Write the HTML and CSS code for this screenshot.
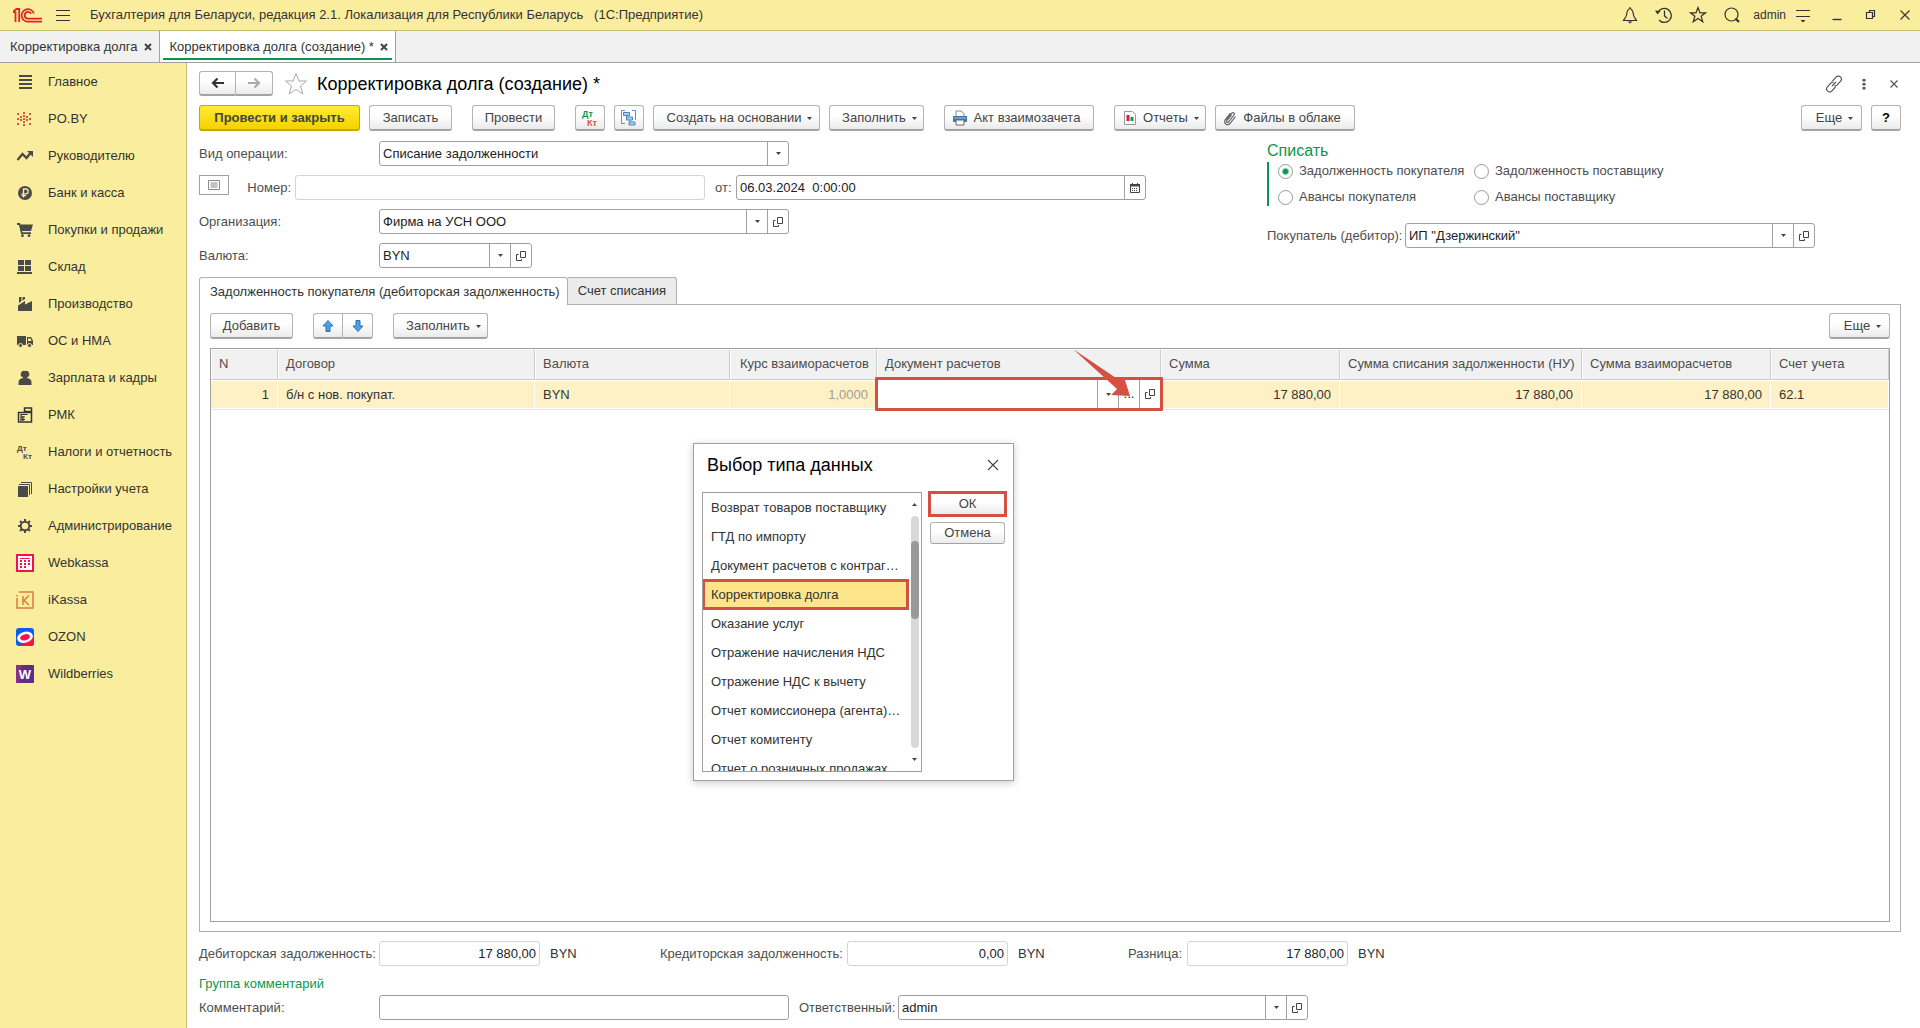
FILE: index.html
```html
<!DOCTYPE html>
<html lang="ru">
<head>
<meta charset="utf-8">
<meta name="viewport" content="width=device-width, initial-scale=1">
<title>Корректировка долга (создание)</title>
<link rel="stylesheet" href="styles.css">
</head>
<body>
<svg class="sprite" aria-hidden="true">
  <symbol id="open" viewBox="0 0 12 12"><path d="M5.500 1.500h5v6h-5zM3.500 4.500h-2v6h5v-1.500" fill="none" stroke="#444"/></symbol>
  <symbol id="caret" viewBox="0 0 7 4"><path d="M0 0h7L3.500 4z" fill="#444"/></symbol>
</svg>
<div class="app">
  <header class="topbar">
    <svg class="logo" viewBox="0 0 29 15" aria-label="1С"><g fill="none" stroke="#e5202b" stroke-width="1.800"><path d="M0 4.200H2.500V14M0 3.500L3.500 1H6.200V14M20.800 5.500A6.200 6.200 0 1 0 15 13.600H29M18 5.800A3.300 3.300 0 1 0 15 10.600H29"/></g></svg>
    <button class="plain" aria-label="Меню"><svg width="14" height="12" viewBox="0 0 14 12"><path d="M0 1.500h14M0 6.500h14M0 11.500h14" stroke="#333"/></svg></button>
    <span class="app-title">Бухгалтерия для Беларуси, редакция 2.1. Локализация для Республики Беларусь &nbsp; (1С:Предприятие)</span>
    <div class="top-tools">
      <button class="plain" aria-label="Уведомления"><svg width="18" height="18" viewBox="0 0 18 18"><path d="M9 2.500C6 3.500 6 6 5.500 9 5 11.500 3.500 12.500 2.500 14.500h13C14.500 12.500 13 11.500 12.500 9 12 6 12 3.500 9 2.500zM9 1v2" fill="none" stroke="#333" stroke-width="1.200"/><path d="M6.500 15.500h5L9 17.500z" fill="#333"/></svg></button>
      <button class="plain" aria-label="История"><svg width="18" height="18" viewBox="0 0 18 18"><path d="M3 6.500A7 7 0 1 1 4 14M9.500 4.500V10l3 2.500" fill="none" stroke="#333" stroke-width="1.300"/><path d="M0 4.500l5.500.5L2.500 8.500z" fill="#333"/></svg></button>
      <button class="plain" aria-label="Избранное"><svg width="18" height="18" viewBox="0 0 18 18"><path d="M9 1.500l2 5.300h5.500l-4.400 3.400 1.700 5.600L9 12.500l-4.800 3.300 1.700-5.600L1.500 6.800H7z" fill="none" stroke="#333" stroke-width="1.200"/></svg></button>
      <button class="plain" aria-label="Поиск"><svg width="18" height="18" viewBox="0 0 18 18"><circle cx="8.500" cy="8.500" r="6.500" fill="none" stroke="#333" stroke-width="1.200"/><path d="M12.500 12.500l3.500 3.500" stroke="#333" stroke-width="2.200"/></svg></button>
      <a class="user" href="#">admin</a>
      <button class="plain" aria-label="Настройки"><svg width="18" height="18" viewBox="0 0 18 18"><path d="M2 4.500h14M2 10.500h14" stroke="#333" stroke-width="1.200"/><path d="M6.500 14h5L9 16.500z" fill="#333"/></svg></button>
      <button class="plain" aria-label="Свернуть"><svg width="18" height="18" viewBox="0 0 18 18"><path d="M4.500 13.500h9" stroke="#333" stroke-width="1.400"/></svg></button>
      <button class="plain" aria-label="Развернуть"><svg width="18" height="18" viewBox="0 0 18 18"><path d="M4.500 6.500h6v6h-6zM7.500 6V4.500h5v6h-2" fill="none" stroke="#333" stroke-width="1.200"/></svg></button>
      <button class="plain" aria-label="Закрыть"><svg width="18" height="18" viewBox="0 0 18 18"><path d="M4.500 4.500l9 9m0-9l-9 9" stroke="#333" stroke-width="1.100"/></svg></button>
    </div>
  </header>

  <nav class="tabs">
    <a class="tab" href="#">Корректировка долга <svg width="8" height="8" viewBox="0 0 8 8"><path d="M1 1l6 6m0-6L1 7" stroke="#444" stroke-width="2"/></svg></a>
    <a class="tab current" href="#">Корректировка долга (создание) * <svg width="8" height="8" viewBox="0 0 8 8"><path d="M1 1l6 6m0-6L1 7" stroke="#444" stroke-width="2"/></svg></a>
  </nav>

  <div class="body">
    <nav class="sidebar">
      <a href="#"><svg viewBox="0 0 18 18"><path d="M3 3h13M3 7h13M3 11h13M3 15h13" stroke="#4a4a4a" stroke-width="2"/></svg>Главное</a>
      <a href="#"><svg viewBox="0 0 18 18"><g fill="none" stroke="#d9553f" stroke-width="2" stroke-dasharray="2 1"><path d="M8 2v14M5 6v6M11 6v6"/><path d="M1 4h2M13 4h2M1 9h2M13 9h2M1 14h2M13 14h2" stroke-dasharray="none"/></g></svg>PO.BY</a>
      <a href="#"><svg viewBox="0 0 18 18"><path d="M1.500 13l5-6 4 4 4-5" fill="none" stroke="#4a4a4a" stroke-width="2.400"/><path d="M11 4h6v6z" fill="#4a4a4a"/></svg>Руководителю</a>
      <a href="#"><svg viewBox="0 0 18 18"><circle cx="9" cy="9" r="7" fill="#4a4a4a"/><path d="M7.500 13.500V5h2.300a2.300 2.300 0 0 1 0 4.800H5.500M5.500 11.700h4.500" fill="none" stroke="#fbed9e" stroke-width="1.300"/></svg>Банк и касса</a>
      <a href="#"><svg viewBox="0 0 18 18"><path d="M1 2h3l.5 1.500H17L15 10H6l.3 1.200H15V13H5L3 4H1z" fill="#4a4a4a"/><circle cx="6.500" cy="14.700" r="1.400" fill="#4a4a4a"/><circle cx="13" cy="14.700" r="1.400" fill="#4a4a4a"/></svg>Покупки и продажи</a>
      <a href="#"><svg viewBox="0 0 18 18"><path d="M2 2h6v5H2zM9 2h6v5H9zM2 8h6v5H2zM9 8h6v5H9zM1 14h15v2H1z" fill="#4a4a4a"/></svg>Склад</a>
      <a href="#"><svg viewBox="0 0 18 18"><path d="M2 16V10.500L9 6v3.500L16 6v10zM3 2h2.500v4L3 8zM6.500 2H9v2L6.500 5.500z" fill="#4a4a4a"/></svg>Производство</a>
      <a href="#"><svg viewBox="0 0 18 18"><path d="M1 4h9v9H1zM11 5h4l2 3.500V13h-6z" fill="#4a4a4a"/><path d="M12 6.500h2.500L15.500 9H12z" fill="#fbed9e"/><g fill="#4a4a4a" stroke="#fbed9e"><circle cx="4.500" cy="13.500" r="2"/><circle cx="13.500" cy="13.500" r="2"/></g></svg>ОС и НМА</a>
      <a href="#"><svg viewBox="0 0 18 18"><path d="M9 2a3.300 3.300 0 0 1 2 6.300V9c3 .5 4.500 2 4.500 4.500V16h-13v-2.500C2.500 11 4 9.500 7 9v-.7A3.300 3.300 0 0 1 9 2z" fill="#4a4a4a"/></svg>Зарплата и кадры</a>
      <a href="#"><svg viewBox="0 0 18 18"><path d="M2.500 6.500h13v9.500h-13zM8.500 2h7v3.500h-7zM9 6V4.500" fill="none" stroke="#333" stroke-width="1.500"/><path d="M4.500 8.500h7M5 11h4M5 13.500h4M7 10v5M5 9v6" stroke="#333" stroke-width="1.200"/></svg>РМК</a>
      <a href="#"><svg viewBox="0 0 18 18"><text x="1" y="8" class="mini">Дт</text><text x="7" y="16" class="mini">Кт</text></svg>Налоги и отчетность</a>
      <a href="#"><svg viewBox="0 0 18 18"><path d="M2 6h10v11H2z" fill="#4a4a4a"/><path d="M3 4.500h10.500V15M5 2.500h10.500V14" fill="none" stroke="#4a4a4a"/></svg>Настройки учета</a>
      <a href="#"><svg viewBox="0 0 18 18"><circle cx="9" cy="9" r="4.300" fill="none" stroke="#4a4a4a" stroke-width="2"/><path d="M9 2v2.500M9 13.500V16M2 9h2.500M13.500 9H16M4 4l2 2M12 12l2 2M14 4l-2 2M6 12l-2 2" stroke="#4a4a4a" stroke-width="2"/></svg>Администрирование</a>
      <a href="#"><svg viewBox="0 0 18 18"><path d="M1 1h16v16H1z" fill="#fff" stroke="#f5124c" stroke-width="2"/><path d="M4 4.500h10" stroke="#f5124c"/><path d="M4 7h10M4 10h10M4 13h6" stroke="#f5124c" stroke-width="2" stroke-dasharray="2 2"/></svg>Webkassa</a>
      <a href="#"><svg viewBox="0 0 18 18"><path d="M3 1h14v16H1V7M1 5.500V4M7 5v9M13 4.500L8 9.500l5 4.500" fill="none" stroke="#de7b3c" stroke-width="1.500"/></svg>iKassa</a>
      <a href="#"><svg viewBox="0 0 18 18"><rect width="18" height="18" rx="3" fill="#0b5cf5"/><path d="M3 18L18 9v6a3 3 0 0 1-3 3z" fill="#f5124c"/><ellipse cx="9" cy="9.300" rx="8" ry="5.500" fill="#fff" transform="rotate(-15 9 9.300)"/><ellipse cx="9" cy="9.300" rx="5" ry="3" fill="#f5124c" transform="rotate(-15 9 9.300)"/></svg>OZON</a>
      <a href="#"><svg viewBox="0 0 18 18"><rect width="18" height="18" rx="1" fill="#5f2d82"/><path d="M0 1a1 1 0 0 1 1-1h5L3 18H1a1 1 0 0 1-1-1z" fill="#8a2f86"/><text x="9" y="14" text-anchor="middle" class="wb">W</text></svg>Wildberries</a>
    </nav>

    <main class="main">
      <div class="form-head">
        <div class="pair">
          <button class="btn" aria-label="Назад"><svg width="14" height="12" viewBox="0 0 14 12"><path d="M2 6h11M6.500 1.500L2 6l4.500 4.500" fill="none" stroke="#333" stroke-width="2.200"/></svg></button>
          <button class="btn" aria-label="Вперед"><svg width="14" height="12" viewBox="0 0 14 12"><path d="M1 6h11M7.500 1.500L12 6l-4.500 4.500" fill="none" stroke="#aaa" stroke-width="2.200"/></svg></button>
        </div>
        <svg class="fav" width="24" height="24" viewBox="0 0 24 24"><path d="M12 1.500l3 7.500h7.500l-6 5 2.300 8L12 17.500 5.200 22l2.300-8-6-5H9z" fill="#fff" stroke="#aaa"/></svg>
        <h1>Корректировка долга (создание) *</h1>
        <div class="head-tools">
          <button class="plain" aria-label="Ссылка"><svg width="18" height="18" viewBox="0 0 18 18"><g fill="none" stroke="#555" stroke-width="1.200"><path d="M7.500 6l3.500-3.800a3 3 0 0 1 4.600 4L12 10.200c-.8.800-1.800.8-2.500.3"/><path d="M10.500 12L7 15.800a3 3 0 0 1-4.600-4L6 7.800c.8-.8 1.800-.8 2.500-.3M7 11l4-4"/></g></svg></button>
          <button class="plain" aria-label="Действия"><svg width="18" height="18" viewBox="0 0 18 18"><path d="M7.500 4h3v2.500h-3zM7.500 8h3v2.500h-3zM7.500 12h3v2.500h-3z" fill="#555"/></svg></button>
          <button class="plain" aria-label="Закрыть форму"><svg width="18" height="18" viewBox="0 0 18 18"><path d="M5.500 5.500l7 7m0-7l-7 7" stroke="#555" stroke-width="1.200"/></svg></button>
        </div>
      </div>

      <div class="commands">
        <button class="btn primary">Провести и закрыть</button>
        <button class="btn w-m">Записать</button>
        <button class="btn w-m apart">Провести</button>
        <button class="btn square apart" aria-label="Проводки"><svg width="18" height="18" viewBox="0 0 18 18"><text x="1" y="8" class="mini dt">Дт</text><text x="6" y="17" class="mini kt">Кт</text></svg></button>
        <button class="btn square" aria-label="Структура подчиненности"><svg width="16" height="16" viewBox="0 0 16 16"><path d="M4 .5H.5v13H4M11 .5h3.500V10" fill="none" stroke="#5b94c9"/><path d="M2.500 2.500h6v3h-6zM5.500 7h6v3h-6zM8 12h6v3H8zM5.500 6v1M9 10v2" fill="#a9cdec" stroke="#4a86be"/></svg></button>
        <button class="btn w-l">Создать на основании <svg class="car"><use href="#caret"/></svg></button>
        <button class="btn w-f">Заполнить <svg class="car"><use href="#caret"/></svg></button>
        <button class="btn w-x apart"><svg width="16" height="16" viewBox="0 0 16 16"><path d="M4 6V1h5l3 2.500V6" fill="#fff" stroke="#888"/><path d="M1 6h14v6H1z" fill="#3f78ad"/><path d="M2 8h12" stroke="#9cc3e6"/><path d="M4 10h8v5H4z" fill="#fff" stroke="#666"/></svg>Акт взаимозачета</button>
        <button class="btn w-o apart"><svg class="report" width="14" height="16" viewBox="0 0 14 16"><path d="M1.500 1.500h8l3 3v10h-11z" fill="#fff" stroke="#999"/><path d="M5 5v6" stroke="#e8173f" stroke-width="3"/><path d="M9 7v4" stroke="#0a9a4a" stroke-width="3"/></svg>Отчеты <svg class="car"><use href="#caret"/></svg></button>
        <button class="btn w-c"><svg width="14" height="16" viewBox="0 0 14 16"><path d="M3 9.500l6-6.500c1.500-1 3 .3 2 2L5.500 12c-1 1-2.500 0-1.700-1.500L8.500 5M12.500 6.500L7 13.500c-2.500 2.500-6.500.5-5-3.500L7.500 3" fill="none" stroke="#666" stroke-width="1.200"/></svg>Файлы в облаке</button>
        <button class="btn w-e right">Еще <svg class="car"><use href="#caret"/></svg></button>
        <button class="btn square help">?</button>
      </div>

      <div class="form">
        <div class="fields">
          <div class="row"><label class="lab" for="op">Вид операции:</label>
            <div class="combo w-field"><select id="op"><option>Списание задолженности</option></select><span class="drop"><svg class="tri"><use href="#caret"/></svg></span></div></div>
          <div class="row">
            <div class="num-lab"><button class="note" aria-label="Примечание"><svg width="12" height="10" viewBox="0 0 12 10"><path d="M.5.500h11v9H.5zM2.500 3h7M2.500 5h7M2.500 7h7" fill="none" stroke="#888"/></svg></button><label for="num">Номер:</label></div>
            <input class="box soft w-field" id="num" type="text">
            <label class="from" for="date">от:</label>
            <div class="combo w-field"><input id="date" type="text" value="06.03.2024  0:00:00"><button aria-label="Календарь"><svg width="10" height="10" viewBox="0 0 10 10"><path d="M.5 1.500h9v8h-9z" fill="#fff" stroke="#444"/><path d="M0 1h10v2.500H0zM2 0h1v2H2zM7 0h1v2H7z" fill="#444"/><path d="M2 5.500h6M2 7.500h6" stroke="#444" stroke-dasharray="1 1"/></svg></button></div></div>
          <div class="row"><label class="lab" for="org">Организация:</label>
            <div class="combo open w-field"><select id="org"><option>Фирма на УСН ООО</option></select><span class="drop"><svg class="tri"><use href="#caret"/></svg></span><button aria-label="Открыть"><svg class="op"><use href="#open"/></svg></button></div></div>
          <div class="row"><label class="lab" for="cur">Валюта:</label>
            <div class="combo open w-cur"><select id="cur"><option>BYN</option></select><span class="drop"><svg class="tri"><use href="#caret"/></svg></span><button aria-label="Открыть"><svg class="op"><use href="#open"/></svg></button></div></div>
        </div>
        <div class="side">
          <fieldset>
            <legend>Списать</legend>
            <div class="radios">
              <label><input type="radio" name="w" checked>Задолженность покупателя</label>
              <label><input type="radio" name="w">Задолженность поставщику</label>
              <label><input type="radio" name="w">Авансы покупателя</label>
              <label><input type="radio" name="w">Авансы поставщику</label>
            </div>
          </fieldset>
          <div class="row"><label class="buyer" for="buyer">Покупатель (дебитор):</label>
            <div class="combo open w-field"><select id="buyer"><option>ИП "Дзержинский"</option></select><span class="drop"><svg class="tri"><use href="#caret"/></svg></span><button aria-label="Открыть"><svg class="op"><use href="#open"/></svg></button></div></div>
        </div>
      </div>

      <div class="pages">
        <button class="page on">Задолженность покупателя (дебиторская задолженность)</button>
        <button class="page">Счет списания</button>
      </div>
      <section class="panel">
        <div class="commands">
          <button class="btn w-m">Добавить</button>
          <div class="pair apart">
            <button class="btn" aria-label="Вверх"><svg width="12" height="12" viewBox="0 0 12 12"><path d="M6 .5l5 5.500H8v5.500H4V6H1z" fill="#4aa3e8" stroke="#2b6fae"/></svg></button>
            <button class="btn" aria-label="Вниз"><svg width="12" height="12" viewBox="0 0 12 12"><path d="M6 11.500L11 6H8V.5H4V6H1z" fill="#4aa3e8" stroke="#2b6fae"/></svg></button>
          </div>
          <button class="btn w-f apart">Заполнить <svg class="car"><use href="#caret"/></svg></button>
          <button class="btn w-e right">Еще <svg class="car"><use href="#caret"/></svg></button>
        </div>
        <div class="grid-box">
          <table>
            <colgroup><col class="c1"><col class="c2"><col class="c3"><col class="c4"><col class="c5"><col class="c6"><col class="c7"><col class="c8"><col class="c9"></colgroup>
            <thead><tr><th>N</th><th>Договор</th><th>Валюта</th><th class="num">Курс взаиморасчетов</th><th>Документ расчетов</th><th>Сумма</th><th>Сумма списания задолженности (НУ)</th><th>Сумма взаиморасчетов</th><th>Счет учета</th></tr></thead>
            <tbody><tr><td class="num">1</td><td>б/н с нов. покупат.</td><td>BYN</td><td class="num dim">1,0000</td>
              <td class="edit"><div class="combo open cell"><select aria-label="Документ расчетов"><option></option></select><span class="drop"><svg class="tri"><use href="#caret"/></svg></span><button aria-label="Выбрать">...</button><button aria-label="Открыть"><svg class="op"><use href="#open"/></svg></button></div>
                <svg class="pointer" width="60" height="50" viewBox="0 0 60 50"><path d="M1 0L47 31l5-3 6 19-19-1 6-6z" fill="#d64f43"/></svg></td>
              <td class="num">17 880,00</td><td class="num">17 880,00</td><td class="num">17 880,00</td><td>62.1</td></tr></tbody>
          </table>
        </div>
      </section>

      <div class="totals">
        <label class="lab" for="t1">Дебиторская задолженность:</label><input class="box soft sum" id="t1" type="text" readonly value="17 880,00"><span class="unit">BYN</span>
        <label class="t-cred" for="t2">Кредиторская задолженность:</label><input class="box soft sum" id="t2" type="text" readonly value="0,00"><span class="unit">BYN</span>
        <label class="t-diff" for="t3">Разница:</label><input class="box soft sum" id="t3" type="text" readonly value="17 880,00"><span class="unit">BYN</span>
      </div>
      <div class="group">Группа комментарий</div>
      <div class="row"><label class="lab" for="com">Комментарий:</label><input class="box w-field" id="com" type="text">
        <label class="resp" for="resp">Ответственный:</label>
        <div class="combo open w-field"><select id="resp"><option>admin</option></select><span class="drop"><svg class="tri"><use href="#caret"/></svg></span><button aria-label="Открыть"><svg class="op"><use href="#open"/></svg></button></div></div>

      <div class="dialog" role="dialog" aria-labelledby="dlg">
        <div class="dlg-head"><h2 id="dlg">Выбор типа данных</h2><button class="plain" aria-label="Закрыть"><svg width="12" height="12" viewBox="0 0 12 12"><path d="M1 1l10 10m0-10L1 11" stroke="#444" stroke-width="1.100"/></svg></button></div>
        <div class="dlg-body">
          <div class="list">
            <ul role="listbox" aria-labelledby="dlg">
              <li role="option">Возврат товаров поставщику</li>
              <li role="option">ГТД по импорту</li>
              <li role="option">Документ расчетов с контраг…</li>
              <li role="option" aria-selected="true" class="sel">Корректировка долга</li>
              <li role="option">Оказание услуг</li>
              <li role="option">Отражение начисления НДС</li>
              <li role="option">Отражение НДС к вычету</li>
              <li role="option">Отчет комиссионера (агента)…</li>
              <li role="option">Отчет комитенту</li>
              <li role="option">Отчет о розничных продажах</li>
            </ul>
            <div class="scroll"><svg class="tri up"><use href="#caret"/></svg><div class="track"><div class="thumb"></div></div><svg class="tri"><use href="#caret"/></svg></div>
          </div>
          <div class="dlg-btns"><button class="btn ok">ОК</button><button class="btn">Отмена</button></div>
        </div>
      </div>
    </main>
  </div>
</div>
</body>
</html>
```

FILE: styles.css
```css
* { box-sizing: border-box; }
body { margin: 0; font: 13px/18px "Liberation Sans", Arial, sans-serif; color: #333; background: #fff; }
button, input, select { font: inherit; color: inherit; margin: 0; padding: 0; border: 0; background: none; border-radius: 0; }
a { color: inherit; text-decoration: none; }
svg { flex: none; display: block; }
h1, h2 { margin: 0; font-size: 18px; line-height: 24px; font-weight: 400; color: #000; }
ul { margin: 0; padding: 0; list-style: none; }
.sprite { position: absolute; width: 0; height: 0; }
.app { min-height: 100vh; display: flex; flex-direction: column; }

.topbar { display: flex; align-items: center; height: 31px; padding: 0 6px 0 13px; background: #fbed9e; border-bottom: 1px solid #c9bd6e; }
.logo { width: 29px; height: 15px; margin-right: 14px; }
.app-title { margin-left: 20px; white-space: nowrap; }
.plain { display: flex; align-items: center; justify-content: center; }
.top-tools { display: flex; align-items: center; gap: 16px; margin-left: auto; }
.user { font-size: 12px; margin: 0 -8px 0 -4px; }

.tabs { display: flex; height: 32px; background: #f1f1f1; border-bottom: 1px solid #a0a0a0; }
.tab { display: flex; align-items: center; gap: 6px; padding: 0 7px 0 10px; }
.tab.current { position: relative; background: #fff; border: solid #a0a0a0; border-width: 0 1px; }
.tab.current::after { content: ""; position: absolute; left: 3px; right: 3px; bottom: 2px; height: 2px; background: #0a9650; }

.body { flex: 1; display: flex; }
.sidebar { width: 187px; flex: none; background: #fbed9e; border-right: 1px solid #c9bd6e; }
.sidebar a { display: flex; align-items: center; gap: 14px; height: 37px; padding-left: 16px; white-space: nowrap; }
.sidebar a svg { width: 18px; height: 18px; }
.mini { font: bold 8px "Liberation Sans", Arial, sans-serif; fill: #4a4a4a; }
.mini.dt { font-size: 9px; fill: #0a9650; }
.mini.kt { font-size: 9px; fill: #d9553f; }
.wb { font: bold 13px "Liberation Sans", Arial, sans-serif; fill: #fff; }

.main { position: relative; flex: 1; min-width: 0; display: flex; flex-direction: column; padding: 8px 19px 8px 12px; }
.form-head { display: flex; align-items: center; height: 25px; }
.fav { margin: 0 9px 0 11px; }
.head-tools { display: flex; gap: 12px; margin-left: auto; margin-right: -2px; }

.btn { display: flex; align-items: center; justify-content: center; gap: 8px; height: 26px; color: #444; white-space: nowrap; border: 1px solid #b3b3b3; border-bottom: 2px solid #a3a3a3; border-radius: 3px; background: linear-gradient(#fff 40%, #ebebeb); }
.btn.primary { width: 161px; font-weight: 700; border-color: #c6a800; background: linear-gradient(#ffec33, #f4d200); }
.w-m { width: 83px; }
.w-l { width: 167px; }
.w-f { width: 95px; }
.w-x { width: 150px; }
.w-o { width: 92px; }
.w-c { width: 140px; }
.w-e { width: 61px; }
.w-x, .w-c { padding-right: 6px; gap: 6px; }
.w-l, .w-f, .w-o, .w-e { padding-left: 6px; gap: 6px; }
.w-o { padding-left: 2px; }
.btn.square { width: 30px; }
.btn.help { font-weight: 700; color: #000; }
.car { width: 5px; height: 3px; margin-top: 2px; }
.tri { width: 5px; height: 3px; }
.op { width: 12px; height: 12px; }
.pair { display: flex; }
.pair .btn { width: 30px; }
.form-head .pair .btn { width: 37px; height: 25px; }
.pair .btn:first-child { border-radius: 3px 0 0 3px; }
.pair .btn:last-child { border-left: 0; border-radius: 0 3px 3px 0; }
.commands { display: flex; gap: 9px; margin: 9px 0 10px; }
.commands .apart { margin-left: 11px; }
.commands .right { margin-left: auto; }

.form { display: flex; gap: 121px; color: #4d4d4d; }
.fields { display: flex; flex-direction: column; gap: 9px; }
.row { display: flex; align-items: center; color: #4d4d4d; }
.lab { width: 180px; flex: none; white-space: nowrap; }
.num-lab { display: flex; align-items: center; width: 96px; height: 25px; justify-content: space-between; padding-right: 4px; }
.note { width: 30px; height: 20px; display: flex; align-items: center; justify-content: center; align-self: flex-start; border: 1px solid #a0a0a0; }
.from { width: 31px; padding-left: 10px; }
.w-field { width: 410px; }
.w-cur { width: 153px; }
.box, .combo { height: 25px; border: 1px solid #a0a0a0; border-radius: 3px; background: #fff; color: #222; }
.box { padding: 0 3px; }
.box.soft { border-color: #d4d4d4; }
.combo { display: grid; grid-template-columns: 1fr 21px; overflow: hidden; }
.combo.open { grid-template-columns: 1fr 21px 21px; }
.combo select { grid-area: 1 / 1 / 2 / 3; appearance: none; padding: 0 25px 0 3px; min-width: 0; outline: 0; }
.combo input { padding: 0 3px; min-width: 0; white-space: pre; }
.combo .drop { grid-area: 1 / 2; pointer-events: none; }
.combo .drop, .combo button { display: flex; align-items: center; justify-content: center; border-left: 1px solid #a0a0a0; }
.side fieldset { margin: 0; padding: 0; border: 0; }
.side legend { padding: 0; font-size: 16px; line-height: 20px; color: #0a9650; }
.radios { display: grid; grid-template-columns: 196px auto; row-gap: 8px; padding: 0 0 0 9px; margin-top: 1px; border-left: 2px solid #0a9650; width: max-content; }
.radios label { display: flex; align-items: center; gap: 6px; }
.radios input { appearance: none; width: 15px; height: 15px; border: 1px solid #999; border-radius: 50%; background: #fff; }
.radios input:checked { background: radial-gradient(#0a9650 0 2px, #fff 4px); }
.side .row { margin-top: 17px; }
.buyer { width: 138px; white-space: nowrap; }

.pages { display: flex; margin-top: 9px; position: relative; }
.page { height: 27px; padding: 0 10px; white-space: nowrap; border: 1px solid #b0b0b0; border-bottom: 0; border-left: 0; background: #ebebeb; border-radius: 0 3px 0 0; }
.page.on { height: 28px; margin-bottom: -1px; padding-right: 7px; background: #fff; border-left: 1px solid #b0b0b0; border-radius: 3px 3px 0 0; }
.panel { flex: 1; display: flex; flex-direction: column; padding: 0 10px 9px; border: 1px solid #b0b0b0; }
.panel .commands { margin: 8px 0 9px; }
.grid-box { flex: 1; min-height: 200px; border: 1px solid #a0a0a0; }
table { width: 100%; table-layout: fixed; border-collapse: separate; border-spacing: 0; }
.c1 { width: 67px; } .c2 { width: 257px; } .c3 { width: 195px; } .c4 { width: 147px; } .c5 { width: 284px; }
.c6 { width: 179px; } .c7 { width: 242px; } .c8 { width: 189px; } .c9 { width: 118px; }
th, td { padding: 0 8px; text-align: left; font-weight: 400; white-space: nowrap; }
th { height: 31px; padding: 0 7px 2px; color: #4d4d4d; background: #f1f1f1; border: 1px solid #fff; border-right-color: #ccc; border-bottom-color: #ccc; }
td { height: 29px; background: #fef1c5; border: 1px solid #fff; border-left: 0; box-shadow: 0 1px #e6e6e6; }
th.num, td.num { text-align: right; }
td.num.dim { color: #a39c97; }
td.edit { position: relative; padding: 0; }
.combo.cell { position: absolute; z-index: 1; inset: -4px -3px -3px -2px; height: auto; border: 3px solid #d64f43; border-radius: 1px; }
.combo.cell { grid-template-columns: 1fr 21px 21px 21px; }
.pointer { position: absolute; z-index: 2; left: 195px; top: -32px; }

.totals { display: flex; align-items: center; margin-top: 9px; color: #4d4d4d; white-space: nowrap; }
.sum { width: 161px; text-align: right; }
.unit { width: 120px; padding-left: 10px; color: #333; }
.t-cred { width: 187px; }
.unit:last-child { width: auto; }
.t-diff { width: 59px; }
.group { margin: 9px 0 2px; color: #0a9650; }
.resp { width: 109px; padding-left: 10px; white-space: nowrap; }

.dialog { position: absolute; left: 506px; top: 380px; width: 321px; height: 338px; padding: 9px 8px 9px 9px; background: #fff; border: 1px solid #a0a0a0; box-shadow: 0 2px 8px rgba(0, 0, 0, .2); }
.dlg-head { display: flex; align-items: center; justify-content: space-between; height: 24px; padding: 0 6px 0 4px; margin-bottom: 15px; }
.dlg-body { display: flex; justify-content: space-between; }
.list { display: flex; width: 220px; height: 280px; margin-left: -1px; border: 1px solid #a0a0a0; overflow: hidden; }
.list ul { flex: 1; min-width: 0; }
.list li { height: 29px; line-height: 29px; padding: 0 4px 0 8px; white-space: nowrap; }
.list li.sel { background: #fce58b; outline: 3px solid #d64f43; outline-offset: -2px; }
.scroll { width: 13px; display: flex; flex-direction: column; align-items: center; gap: 10px; padding: 10px 0; }
.scroll .up { transform: rotate(180deg); }
.track { flex: 1; width: 8px; padding-top: 25px; border-radius: 4px; background: #d8d8d8; }
.thumb { height: 78px; border-radius: 4px; background: #999; }
.dlg-btns { display: flex; flex-direction: column; gap: 7px; padding-top: 1px; }
.dlg-btns .btn { width: 75px; height: 22px; border-bottom-width: 1px; }
.dlg-btns .ok { border-radius: 0; outline: 3px solid #d64f43; outline-offset: -1px; }
```
